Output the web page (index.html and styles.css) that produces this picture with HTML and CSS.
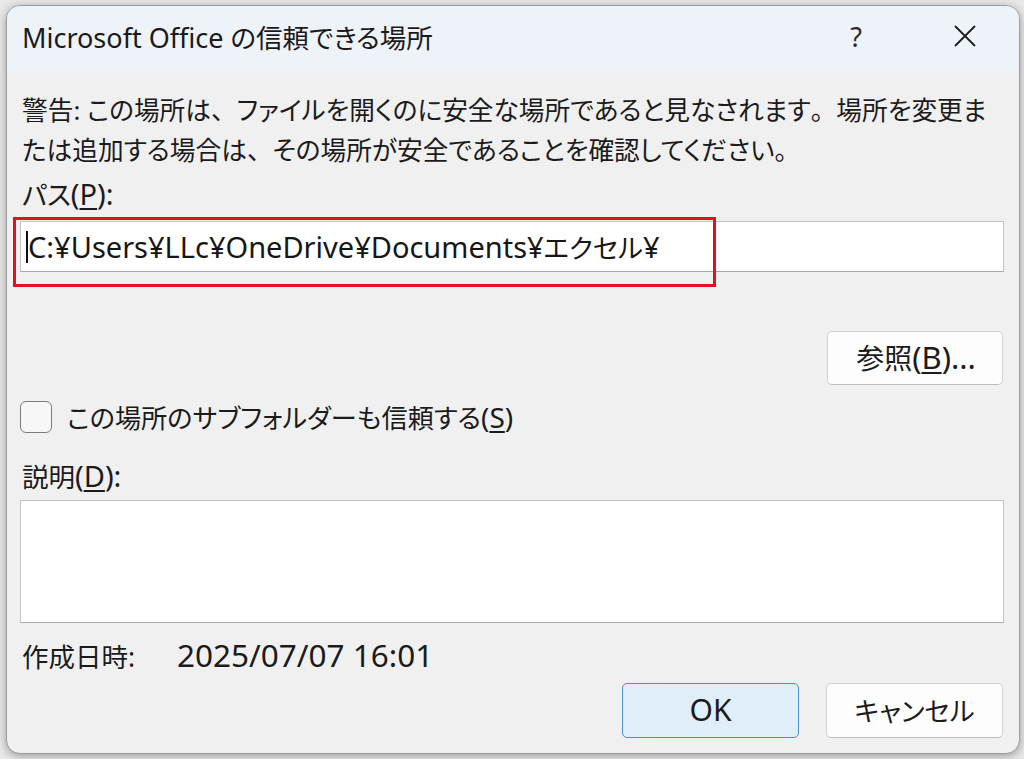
FILE: index.html
```html
<!DOCTYPE html>
<html lang="ja">
<head>
<meta charset="utf-8">
<title>Microsoft Office の信頼できる場所</title>
<link rel="stylesheet" href="styles.css">
</head>
<body>
<div class="dialog">
  <div class="titlebar">
    <div class="title"><span class="lat-t">Microsoft Office</span> の信頼できる場所</div>
    <div class="tb-help">?</div>
    <div class="tb-close">
      <svg width="24" height="24" viewBox="0 0 24 24"><path d="M2 2 L22 22 M22 2 L2 22" stroke="#1c1c1c" stroke-width="1.8" fill="none"/></svg>
    </div>
  </div>
  <div class="content">
    <div class="warning">警告<span class="lat">:</span> この場所は<span class="punct">、</span>ファイルを開くのに安全な場所であると見なされます<span class="punct">。</span>場所を変更ま<br>たは追加する場合は<span class="punct">、</span>その場所が安全であることを確認してください<span class="punct">。</span></div>
    <div class="label">パス<span class="lat">(<u>P</u>):</span></div>
    <div class="path-wrap">
      <div class="field path"><span class="caret"></span><span class="lat">C:¥Users¥LLc¥OneDrive¥Documents¥</span>エクセル<span class="lat">¥</span></div>
      <div class="highlight"></div>
    </div>
    <div class="browse-row">
      <div class="btn browse">参照<span class="lat">(<u>B</u>)...</span></div>
    </div>
    <div class="check-row">
      <span class="checkbox"></span>
      <span class="check-label">この場所のサブフォルダーも信頼する<span class="lat">(<u>S</u>)</span></span>
    </div>
    <div class="label desc-label">説明<span class="lat">(<u>D</u>):</span></div>
    <div class="field desc"></div>
    <div class="created"><span class="created-key">作成日時<span class="lat">:</span></span><span class="lat">2025/07/07 16:01</span></div>
    <div class="actions">
      <div class="btn ok"><span class="lat">OK</span></div>
      <div class="btn cancel">キャンセル</div>
    </div>
  </div>
</div>
</body>
</html>
```
FILE: styles.css
```css
html, body {
  margin: 0;
  padding: 0;
}
body {
  width: 1024px;
  height: 759px;
  background: #e9e9e9;
  overflow: hidden;
  font-family: "Noto Sans", "Noto Sans CJK JP", sans-serif;
  font-feature-settings: "palt";
  color: #1b1b1b;
}
.lat {
  font-size: 29px;
}
.lat-t {
  font-size: 27px;
}
.punct {
  font-feature-settings: normal;
}
.dialog {
  margin: 5px 0 0 6px;
  width: 1012px;
  height: 747px;
  border: 1px solid #9c9c9c;
  border-radius: 14px;
  background: #f0f0f0;
  overflow: hidden;
  box-shadow: 0 2px 10px rgba(0,0,0,0.35);
  display: flex;
  flex-direction: column;
}
.titlebar {
  height: 66px;
  box-sizing: border-box;
  padding-bottom: 6px;
  flex: none;
  background: #eef2f9;
  display: flex;
  align-items: center;
}
.title {
  margin-left: 15px;
  font-size: 26.5px;
  color: #1a1a1a;
  flex: 1;
}
.tb-help {
  width: 30px;
  text-align: center;
  font-size: 27px;
  color: #2a2a2a;
  margin-right: 82px;
  font-family: "Noto Sans", sans-serif;
}
.tb-close {
  width: 24px;
  height: 24px;
  margin-right: 42px;
  display: flex;
}
.content {
  padding: 19px 15px 0 13px;
  display: flex;
  flex-direction: column;
}
.warning {
  font-size: 25.7px;
  line-height: 40px;
  margin-left: 2px;
  white-space: nowrap;
}
.warning .lat {
  font-size: 25.7px;
}
.label {
  font-size: 26.5px;
  line-height: 40px;
  height: 40px;
  margin-top: 3px;
  margin-left: 2px;
}
u {
  text-decoration-thickness: 1.5px;
  text-underline-offset: 3px;
}
.path-wrap {
  position: relative;
  margin-top: 7px;
}
.field {
  background: #fff;
  border: 1px solid #c3c3c3;
  border-bottom-color: #a8a8a8;
  box-sizing: border-box;
}
.path {
  height: 51px;
  font-size: 26.5px;
  display: flex;
  align-items: center;
  padding-left: 5px;
  white-space: nowrap;
  color: #161616;
}
.path .lat {
  font-size: 29px;
}
.caret {
  width: 2px;
  height: 32px;
  background: #111;
}
.highlight {
  position: absolute;
  left: -7px;
  top: -4px;
  width: 703px;
  height: 70px;
  border: 3px solid #e0121c;
  box-sizing: border-box;
  pointer-events: none;
}
.browse-row {
  display: flex;
  justify-content: flex-end;
  margin-top: 59px;
}
.btn {
  box-sizing: border-box;
  background: #fdfdfd;
  border: 1px solid #d2d2d2;
  border-bottom-color: #bdbdbd;
  border-radius: 5px;
  display: flex;
  align-items: center;
  justify-content: center;
  font-size: 26.5px;
  color: #1b1b1b;
}
.browse {
  width: 176px;
  height: 54px;
  margin-right: 1px;
  padding-bottom: 2px;
  font-size: 28px;
  padding-left: 2px;
}
.browse .lat {
  font-size: 31px;
}
.check-row {
  display: flex;
  align-items: center;
  height: 40px;
  margin-top: 12px;
}
.checkbox {
  width: 32px;
  height: 32px;
  flex: none;
  box-sizing: border-box;
  border: 1.5px solid #7d7d7d;
  border-radius: 6px;
  background: #f7f7f7;
}
.check-label {
  font-size: 26.2px;
  margin-left: 15px;
}
.check-label .lat {
  font-size: 28px;
}
.desc-label {
  margin-top: 19px;
}
.desc {
  height: 123px;
  margin-top: 4px;
}
.created {
  font-size: 26.5px;
  line-height: 40px;
  height: 40px;
  margin-top: 12px;
  margin-left: 2px;
  display: flex;
  align-items: baseline;
}
.created-key {
  width: 155px;
}
.created .lat {
  font-size: 31.5px;
}
.created-key .lat {
  font-size: 26.5px;
}
.actions {
  display: flex;
  justify-content: flex-end;
  gap: 27px;
  margin-top: 8px;
}
.ok, .cancel {
  width: 177px;
  height: 55px;
  padding-bottom: 2px;
}
.ok {
  background: #e0eef9;
  border: 1.5px solid #4b8fd1;
}
.ok .lat {
  font-size: 30px;
}
.cancel {
  margin-right: 1px;
}
```
